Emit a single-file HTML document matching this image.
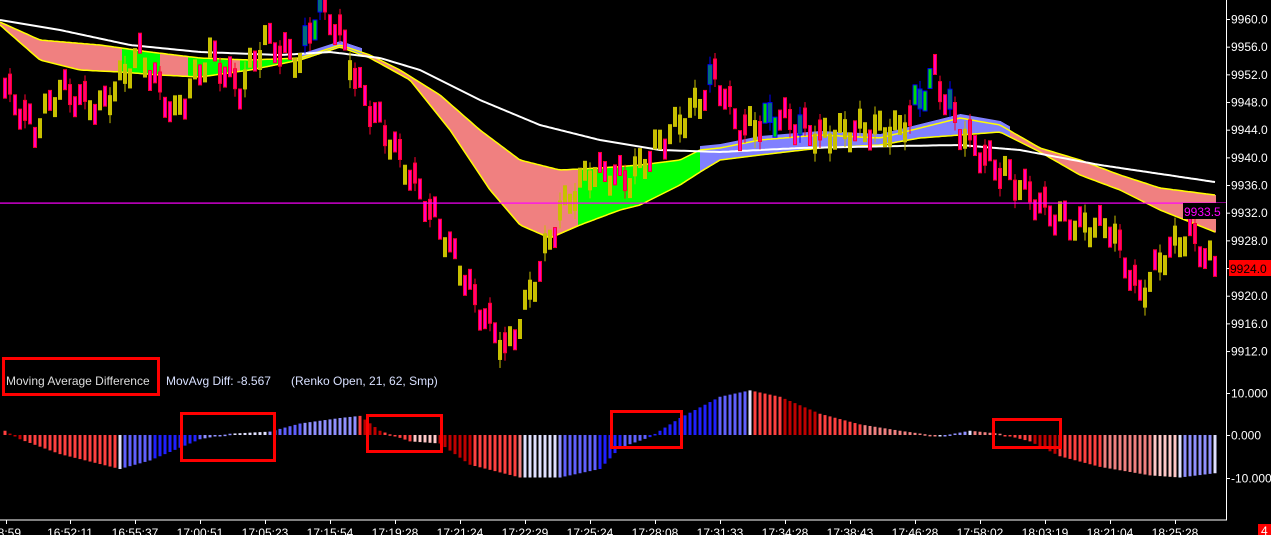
<!DOCTYPE html>
<html><head><meta charset="utf-8"><style>
html,body{margin:0;padding:0;background:#000;width:1271px;height:535px;overflow:hidden}
svg{display:block}
text{font-family:"Liberation Sans",sans-serif;font-size:12px}
</style></head><body>
<svg id="s" width="1271" height="535" xmlns="http://www.w3.org/2000/svg">
<g id="band"></g><g id="cand"></g><g id="hist"></g><g id="ov"></g>
</svg>
<script>
var NS="http://www.w3.org/2000/svg";
function el(p,t,a,txt){var e=document.createElementNS(NS,t);for(var k in a)e.setAttribute(k,a[k]);if(txt!==undefined)e.textContent=txt;document.getElementById(p).appendChild(e);return e;}
function interp(pts,x){if(x<=pts[0][0])return pts[0][1];for(var i=1;i<pts.length;i++){if(x<=pts[i][0]){var a=pts[i-1],b=pts[i];return a[1]+(b[1]-a[1])*(x-a[0])/(b[0]-a[0]);}}return pts[pts.length-1][1];}
function Y(p){return 19+(9960-p)*6.917;}
var up=[[0,22],[40,40],[100,45],[150,52],[200,58],[250,60],[300,58],[340,45],[370,55],[400,70],[440,95],[480,130],[520,160],[560,170],[600,168],[640,165],[680,160],[700,150],[720,148],[760,140],[820,135],[880,138],[920,128],[960,118],[1000,125],[1040,148],[1080,160],[1120,175],[1160,188],[1215,195]];
var lo=[[0,25],[40,60],[80,70],[120,72],[160,75],[200,77],[250,70],[300,60],[340,47],[370,58],[410,80],[450,130],[490,190],[520,225],[550,238],[580,225],[620,210],[640,205],[680,185],[700,172],[720,160],[760,155],[820,148],[880,145],[920,138],[960,135],[1000,132],[1040,152],[1080,175],[1120,190],[1160,210],[1215,232]];
var wh=[[0,20],[60,30],[130,45],[200,52],[280,55],[330,52],[380,58],[420,70],[480,100],[540,125],[600,140],[660,150],[720,152],[800,148],[900,146],[960,145],[1020,150],[1100,165],[1215,182]];
function inR(x,rs){for(var i=0;i<rs.length;i++)if(x>=rs[i][0]&&x<rs[i][1])return true;return false;}
var green=[[122,160],[188,232],[240,292],[578,700]];
var blue=[[300,362],[700,1010]];
for(var x=0;x<1216;x++){var a=interp(up,x),b=interp(lo,x);var c=inR(x,blue)?"#8080ff":(inR(x,green)?"#00ff00":"#f08080");
 if(inR(x,blue)){a=Math.min(a,b)-4;}
 el("band","rect",{x:x,y:Math.min(a,b),width:1,height:Math.abs(b-a)+0.5,fill:c});}
function pl(pts,col,w){var d="";for(var x=0;x<=1215;x+=3)d+=(x?"L":"M")+x+" "+interp(pts,x).toFixed(1);el("band","path",{d:d,stroke:col,"stroke-width":w,fill:"none"});}
pl(up,"#ffff00",1.5);pl(lo,"#ffff00",1.5);pl(wh,"#ffffff",2);
var pr=[[5,9950],[35,9944],[60,9950],[100,9947],[140,9955],[175,9946],[210,9955],[240,9950],[265,9957],[300,9954],[320,9962],[340,9958],[360,9950],[400,9940],[440,9930],[480,9918],[508,9912],[530,9920],[560,9932],[590,9938],[630,9937],[660,9942],[700,9948],[715,9952],[740,9944],[780,9946],[820,9943],[860,9944],[900,9944],[935,9952],[960,9944],[985,9940],[1020,9936],[1050,9932],[1080,9930],[1110,9930],[1140,9920],[1165,9926],[1190,9929],[1215,9924]];
for(var i=0;i<243;i++){var x=5+i*5;var p=interp(pr,x)+Math.sin(i*1.7)*1.6;var upb=(interp(pr,x+5)-interp(pr,x-5))>=0;
 if(Math.sin(i*2.3)>0.85)upb=!upb;
 var yc=Y(p),h=20;
 if(upb){var bl=(x>700&&x<725)||(x>760&&x<815)||(x>905&&x<960)||(x>300&&x<335);
  el("cand","rect",{x:x-2,y:yc-h/2,width:4,height:h,fill:bl?"#00dd00":"#c8c000",stroke:bl?"#0000ff":"none","stroke-width":bl?1:0});
  if(i%3==0)el("cand","rect",{x:x-0.5,y:yc-h/2-8,width:1,height:h+16,fill:bl?"#0000ff":"#c8c000"});}
 else{el("cand","rect",{x:x-1.5,y:yc-h/2,width:3,height:h,fill:"#ff00c0",stroke:"#ff0030","stroke-width":1});
  if(i%3==1)el("cand","rect",{x:x-0.5,y:yc-h/2-6,width:1,height:h+14,fill:"#ff0030"});}}
el("cand","rect",{x:0,y:202.5,width:1226,height:1.2,fill:"#ff00ff"});
var hv=[[5,1],[20,-1],[60,-4.5],[120,-8],[150,-6],[180,-3],[200,-1],[230,0.3],[270,0.8],[300,2.7],[340,4],[360,4.5],[380,1],[410,-1.5],[440,-2],[470,-7],[520,-10],[560,-10],[600,-8],[620,-3],[650,-0.5],[680,4],[720,9],[750,10.5],[780,9],[820,5],[860,2.5],[900,1],[940,-0.3],[970,1],[1000,0.3],[1030,-1.5],[1060,-5],[1100,-7.5],[1150,-9.5],[1180,-10],[1215,-9]];
for(var x=5;x<=1215;x+=5){var v=interp(hv,x),s=interp(hv,x+4)-interp(hv,x-4);var c;
 if(s<0){var k=Math.min(1,-s/1.2);c=k>0.6?"#c00000":k>0.3?"#ff4040":k>0.12?"#f08080":"#ffc8c8";}
 else{var k=Math.min(1,s/1.2);c=k>0.6?"#2020ff":k>0.3?"#6060ff":k>0.12?"#9090ff":"#e0e0ff";}
 var y0=435,y1=435-v*4.25;el("hist","rect",{x:x-1.5,y:Math.min(y0,y1),width:3,height:Math.max(1.5,Math.abs(y1-y0)),fill:c});}
el("ov","rect",{x:1226,y:0,width:1,height:520,fill:"#fff"});
el("ov","rect",{x:0,y:519.5,width:1227,height:1,fill:"#fff"});
for(var j=0;j<13;j++){var y=19+j*27.67;el("ov","rect",{x:1226,y:y,width:4,height:1,fill:"#fff"});el("ov","text",{x:1231,y:y+4.5,fill:"#fff"},(9960-4*j).toFixed(1));}
[[393,"10.000"],[435,"0.000"],[478,"-10.000"]].forEach(function(q){el("ov","rect",{x:1226,y:q[0],width:4,height:1,fill:"#fff"});el("ov","text",{x:1231,y:q[0]+4.5,fill:"#fff"},q[1]);});
el("ov","rect",{x:1183,y:203,width:43,height:16,fill:"#000"});el("ov","text",{x:1184,y:216,fill:"#ff00ff","font-size":"13"},"9933.5");
el("ov","rect",{x:1229,y:260,width:42,height:16,fill:"#ff0000"});el("ov","text",{x:1230,y:273,fill:"#000","font-size":"13"},"9924.0");
var tl=["48:59","16:52:11","16:55:37","17:00:51","17:05:23","17:15:54","17:19:28","17:21:24","17:22:29","17:25:24","17:28:08","17:31:33","17:34:28","17:38:43","17:46:28","17:58:02","18:03:19","18:21:04","18:25:28"];
for(var j=0;j<tl.length;j++){var x=j==0?6:5+j*65;el("ov","rect",{x:x,y:520,width:1,height:4,fill:"#fff"});el("ov","text",{x:x,y:537,fill:"#fff","text-anchor":"middle"},tl[j]);}
el("ov","rect",{x:1258,y:524,width:13,height:11,fill:"#ff0000"});el("ov","text",{x:1261,y:535,fill:"#fff"},"4");
el("ov","text",{x:6,y:385,fill:"#ddd"},"Moving Average Difference");
el("ov","text",{x:166,y:385,fill:"#d8e0ff"},"MovAvg Diff: -8.567");
el("ov","text",{x:291,y:385,fill:"#d8e0ff"},"(Renko Open, 21, 62, Smp)");
[[2,357,158,39],[180,412,96,50],[366,414,77,39],[610,410,73,39],[992,418,70,31]].forEach(function(r){el("ov","rect",{x:r[0]+1.5,y:r[1]+1.5,width:r[2]-3,height:r[3]-3,fill:"none",stroke:"#ff0000","stroke-width":3});});
</script>
</body></html>
